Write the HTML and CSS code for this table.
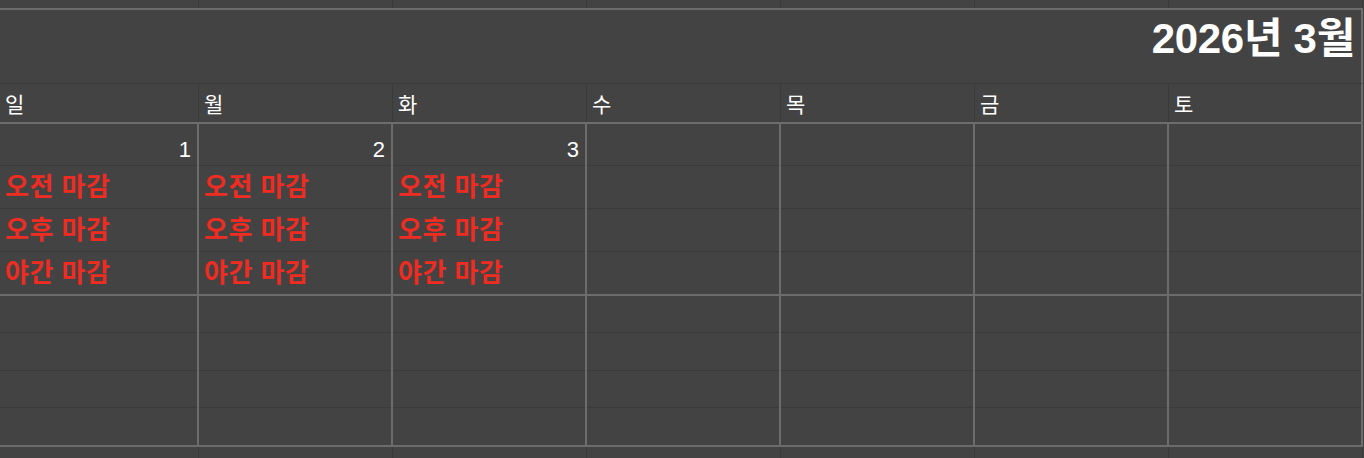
FILE: index.html
```html
<!DOCTYPE html>
<html lang="ko">
<head>
<meta charset="utf-8">
<title>2026년 3월</title>
<link rel="stylesheet" href="styles.css">
</head>
<body>
<div class="sheet">
  <div class="strip strip-top">
    <div></div><div></div><div></div><div></div><div></div><div></div><div></div>
  </div>
  <div class="cal">
    <div class="title">2026년 3월</div>
    <div class="weekdays">
      <div>일</div><div>월</div><div>화</div><div>수</div><div>목</div><div>금</div><div>토</div>
    </div>
    <div class="week week-1">
      <div class="day"><div class="num">1</div><div class="ev">오전 마감</div><div class="ev">오후 마감</div><div class="ev">야간 마감</div></div>
      <div class="day"><div class="num">2</div><div class="ev">오전 마감</div><div class="ev">오후 마감</div><div class="ev">야간 마감</div></div>
      <div class="day"><div class="num">3</div><div class="ev">오전 마감</div><div class="ev">오후 마감</div><div class="ev">야간 마감</div></div>
      <div class="day"><div class="num"></div><div class="ev"></div><div class="ev"></div><div class="ev"></div></div>
      <div class="day"><div class="num"></div><div class="ev"></div><div class="ev"></div><div class="ev"></div></div>
      <div class="day"><div class="num"></div><div class="ev"></div><div class="ev"></div><div class="ev"></div></div>
      <div class="day"><div class="num"></div><div class="ev"></div><div class="ev"></div><div class="ev"></div></div>
    </div>
    <div class="week week-2">
      <div class="day"><div></div><div></div><div></div><div></div></div>
      <div class="day"><div></div><div></div><div></div><div></div></div>
      <div class="day"><div></div><div></div><div></div><div></div></div>
      <div class="day"><div></div><div></div><div></div><div></div></div>
      <div class="day"><div></div><div></div><div></div><div></div></div>
      <div class="day"><div></div><div></div><div></div><div></div></div>
      <div class="day"><div></div><div></div><div></div><div></div></div>
    </div>
  </div>
  <div class="strip strip-bottom">
    <div></div><div></div><div></div><div></div><div></div><div></div><div></div>
  </div>
</div>
</body>
</html>
```

FILE: styles.css
```css
html, body {
  margin: 0;
  padding: 0;
  background: #434343;
}
body {
  font-family: "Liberation Sans", "Noto Sans CJK KR", sans-serif;
  color: #ffffff;
  overflow: hidden;
}
.sheet {
  width: 1364px;
  height: 458px;
  overflow: hidden;
}
.strip,
.weekdays,
.week {
  display: grid;
  grid-template-columns: 199px repeat(6, 194px);
}
.strip > div {
  border-right: 1px solid #3a3a3a;
}
.strip-top {
  height: 8px;
}
.strip-bottom {
  height: 12px;
}
.cal {
  border-top: 2px solid #6c6c6c;
  border-bottom: 2px solid #6c6c6c;
  width: 1363px;
}
.title {
  height: 74px;
  border-bottom: 1px solid #3a3a3a;
  border-right: 2px solid #6c6c6c;
  box-sizing: border-box;
  width: 1363px;
  display: flex;
  align-items: center;
  justify-content: flex-end;
  padding: 0 6px 24px 0;
  font-size: 42px;
  font-weight: bold;
  letter-spacing: -0.3px;
}
.weekdays {
  height: 38px;
  border-bottom: 2px solid #6c6c6c;
}
.weekdays > div {
  border-right: 1px solid #3a3a3a;
  font-size: 21px;
  line-height: 1;
  padding: 10px 0 0 5px;
}
.weekdays > div:last-child {
  border-right: 2px solid #6c6c6c;
}
.week {
  border-bottom: 2px solid #6c6c6c;
}
.week:last-child {
  border-bottom: none;
}
.day {
  border-right: 2px solid #6c6c6c;
  display: flex;
  flex-direction: column;
}
.day > div {
  border-bottom: 1px solid #3a3a3a;
  box-sizing: border-box;
}
.day > div:last-child {
  border-bottom: none;
}
.week-1 .num {
  height: 42px;
  text-align: right;
  font-size: 22px;
  line-height: 1;
  padding: 15px 6px 0 0;
}
.week-1 .ev {
  height: 43px;
  color: #ee2c22;
  font-size: 26px;
  font-weight: bold;
  line-height: 1;
  padding: 8px 0 0 5px;
  white-space: nowrap;
  letter-spacing: 0.5px;
}
.week-1 .ev:last-child {
  height: 42px;
}
.week-2 .day > div {
  height: 37px;
}
.week-2 .day > div:nth-child(2) {
  height: 38px;
}
```
